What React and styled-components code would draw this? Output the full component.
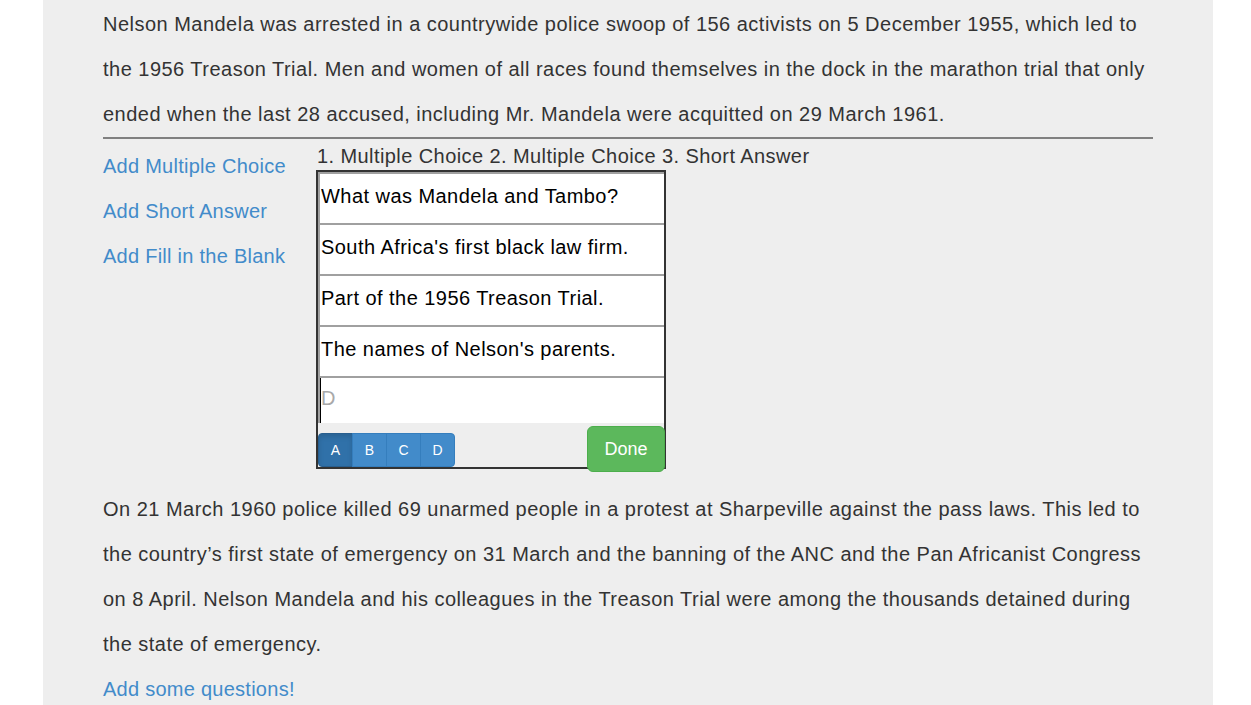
import React from "react";
import styled, { createGlobalStyle } from "styled-components";

const Global = createGlobalStyle`
  html, body { margin: 0; padding: 0; background: #ffffff; }
  body { font-family: "Liberation Sans", Arial, sans-serif; color: #333333; }
  * { box-sizing: border-box; }
`;

const Panel = styled.main`
  width: 1170px;
  margin-left: 43px;
  padding: 2px 60px 0;
  background: #eeeeee;
  min-height: 705px;
  font-size: 20px;
`;

const Paragraph = styled.p`
  margin: ${(p) => p.$top || 0}px 0 0;
  line-height: 45px;
  font-size: 20px;
  letter-spacing: 0.48px;
  white-space: nowrap;
  color: #333333;
`;

const Rule = styled.hr`
  margin: 0;
  border: 0;
  height: 2px;
  background: #808080;
`;

const QuestionRow = styled.section`
  display: flex;
  margin-top: 4px;
`;

const LinkColumn = styled.nav`
  width: 213px;
  flex: none;
  display: flex;
  flex-direction: column;
  padding-top: 1px;
`;

const TextLink = styled.a`
  display: block;
  line-height: 45px;
  font-size: 20px;
  letter-spacing: 0.26px;
  color: #428bca;
  text-decoration: none;
  cursor: pointer;
`;

const Editor = styled.div`
  display: flex;
  flex-direction: column;
`;

const Tabs = styled.div`
  line-height: 27px;
  font-size: 20px;
  letter-spacing: 0.42px;
  color: #333333;
  padding-left: 1px;
  white-space: nowrap;
`;

const Box = styled.div`
  width: 350px;
  border: 2px solid #333333;
  background: #eeeeee;
  display: flex;
  flex-direction: column;
`;

const Field = styled.input`
  display: block;
  width: 100%;
  height: ${(p) => p.$h}px;
  margin: 0;
  padding: 0 2px 4px 1px;
  border-style: solid;
  border-width: 2px 0 0 2px;
  border-color: #a0a0a0;
  background: #ffffff;
  font-family: "Liberation Sans", Arial, sans-serif;
  font-size: 20px;
  letter-spacing: 0.45px;
  color: #000000;
  outline: none;
  box-shadow: ${(p) => (p.$focused ? "inset 1px 0 0 #000000" : "none")};
  &::placeholder { color: #a9a9a9; opacity: 1; }
`;

const Toolbar = styled.div`
  height: 44px;
  display: flex;
  justify-content: space-between;
  align-items: flex-end;
`;

const ButtonGroup = styled.div`
  display: flex;
`;

const LetterButton = styled.button`
  width: 35px;
  height: 34px;
  margin: 0 0 0 ${(p) => (p.$first ? 0 : -1)}px;
  padding: 0;
  border: 1px solid ${(p) => (p.$active ? "#285e8e" : "#357ebd")};
  background: ${(p) => (p.$active ? "#3071a9" : "#428bca")};
  box-shadow: ${(p) => (p.$active ? "inset 0 3px 5px rgba(0,0,0,0.125)" : "none")};
  color: #ffffff;
  font-family: "Liberation Sans", Arial, sans-serif;
  font-size: 14px;
  border-radius: ${(p) => (p.$first ? "4px 0 0 4px" : p.$last ? "0 4px 4px 0" : "0")};
`;

const DoneButton = styled.button`
  align-self: flex-start;
  margin: 3px -1px 0 0;
  width: 78px;
  height: 46px;
  padding: 0;
  border: 1px solid #4cae4c;
  border-radius: 6px;
  background: #5cb85c;
  color: #ffffff;
  font-family: "Liberation Sans", Arial, sans-serif;
  font-size: 18px;
  position: relative;
`;

const answers = [
  "What was Mandela and Tambo?",
  "South Africa's first black law firm.",
  "Part of the 1956 Treason Trial.",
  "The names of Nelson's parents.",
];

export default function App() {
  return (
    <>
      <Global />
      <Panel>
        <Paragraph>
          Nelson Mandela was arrested in a countrywide police swoop of 156 activists on 5 December 1955, which led to
          <br />
          the 1956 Treason Trial. Men and women of all races found themselves in the dock in the marathon trial that only
          <br />
          ended when the last 28 accused, including Mr. Mandela were acquitted on 29 March 1961.
        </Paragraph>
        <Rule />
        <QuestionRow>
          <LinkColumn>
            <TextLink>Add Multiple Choice</TextLink>
            <TextLink>Add Short Answer</TextLink>
            <TextLink>Add Fill in the Blank</TextLink>
          </LinkColumn>
          <Editor>
            <Tabs>1. Multiple Choice 2. Multiple Choice 3. Short Answer</Tabs>
            <Box>
              {answers.map((a) => (
                <Field key={a} $h={51} readOnly defaultValue={a} />
              ))}
              <Field $h={47} $focused readOnly placeholder="D" />
              <Toolbar>
                <ButtonGroup>
                  <LetterButton $first $active>A</LetterButton>
                  <LetterButton>B</LetterButton>
                  <LetterButton>C</LetterButton>
                  <LetterButton $last>D</LetterButton>
                </ButtonGroup>
                <DoneButton>Done</DoneButton>
              </Toolbar>
            </Box>
          </Editor>
        </QuestionRow>
        <Paragraph $top={18}>
          On 21 March 1960 police killed 69 unarmed people in a protest at Sharpeville against the pass laws. This led to
          <br />
          the country’s first state of emergency on 31 March and the banning of the ANC and the Pan Africanist Congress
          <br />
          on 8 April. Nelson Mandela and his colleagues in the Treason Trial were among the thousands detained during
          <br />
          the state of emergency.
        </Paragraph>
        <TextLink>Add some questions!</TextLink>
      </Panel>
    </>
  );
}
